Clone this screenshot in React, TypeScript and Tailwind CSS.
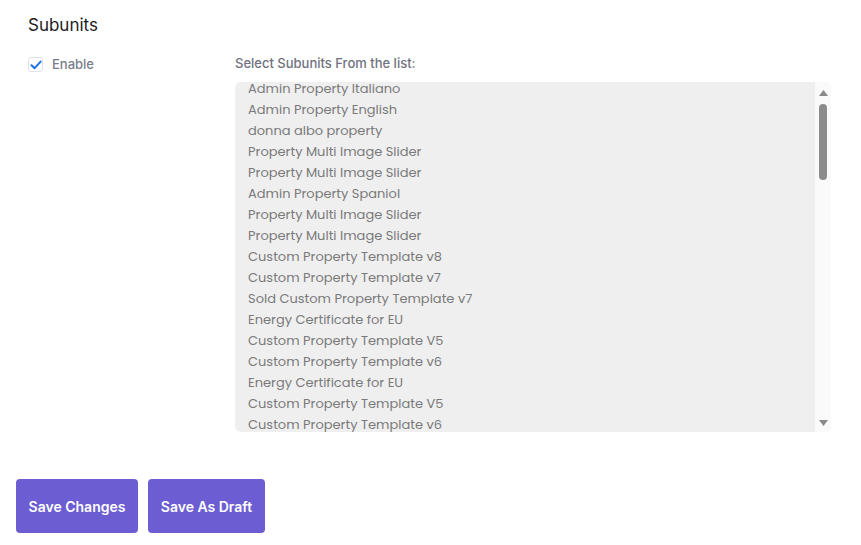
const subunits = [
  'Admin Property Italiano',
  'Admin Property English',
  'donna albo property',
  'Property Multi Image Slider',
  'Property Multi Image Slider',
  'Admin Property Spaniol',
  'Property Multi Image Slider',
  'Property Multi Image Slider',
  'Custom Property Template v8',
  'Custom Property Template v7',
  'Sold Custom Property Template v7',
  'Energy Certificate for EU',
  'Custom Property Template V5',
  'Custom Property Template v6',
  'Energy Certificate for EU',
  'Custom Property Template V5',
  'Custom Property Template v6',
];

const App = () => {
  return (
    <div className="min-h-screen bg-white font-['Inter',sans-serif]">
      <div className="px-[28px] pt-[14px]">
        <h2 className="text-[17px] leading-[22px] text-[#1d1d1f]">Subunits</h2>
        <div className="mt-[20px] flex">
          <label className="mt-[1px] flex h-[15px] w-[207px] items-center gap-[9px]">
            <span className="flex h-[15px] w-[15px] items-center justify-center rounded-[3px] border border-[#dfe2ea] bg-white">
              <svg width="12" height="12" viewBox="0 0 12 12" fill="none">
                <path d="M1.5 6.2 L4.6 9.2 L10.6 2.6" stroke="#1b74e4" strokeWidth="2" strokeLinecap="round" strokeLinejoin="round" />
              </svg>
            </span>
            <span className="text-[13px] font-medium text-[#7a7d8c]">Enable</span>
          </label>
          <div className="flex-1 pr-[2px]">
            <div className="text-[13px] leading-[15px] font-medium text-[#6f7280]">Select Subunits From the list:</div>
            <div className="mt-[11px] flex h-[350px] overflow-hidden rounded-[6px] bg-[#efefef]">
              <div className="flex-1 overflow-hidden">
                <ul className="-mt-[4px] font-['Poppins','Open_Sans',sans-serif] text-[13px] text-[#7a7a7a]">
                  {subunits.map((s, i) => (
                    <li key={i} className="h-[21px] px-[13px] leading-[21px] whitespace-nowrap">
                      {s}
                    </li>
                  ))}
                </ul>
              </div>
              <div className="flex w-[16px] flex-col items-center bg-[#fafafa]">
                <svg width="9" height="6" viewBox="0 0 9 6" className="mt-[8px]">
                  <path d="M0 6 L4.5 0 L9 6 Z" fill="#8a8a8a" />
                </svg>
                <div className="mt-[8px] h-[76px] w-[8px] rounded-full bg-[#8b8b8b]" />
                <div className="flex-1" />
                <svg width="9" height="6" viewBox="0 0 9 6" className="mb-[6px]">
                  <path d="M0 0 L9 0 L4.5 6 Z" fill="#8a8a8a" />
                </svg>
              </div>
            </div>
          </div>
        </div>
      </div>
      <div className="mt-[47px] flex gap-[10px] px-[16px]">
        <button className="h-[54px] w-[122px] rounded-[4px] bg-[#6c5dd3] text-[14px] font-semibold text-white">
          Save Changes
        </button>
        <button className="h-[54px] w-[117px] rounded-[4px] bg-[#6c5dd3] text-[14px] font-semibold text-white">
          Save As Draft
        </button>
      </div>
    </div>
  );
};

export default App;
